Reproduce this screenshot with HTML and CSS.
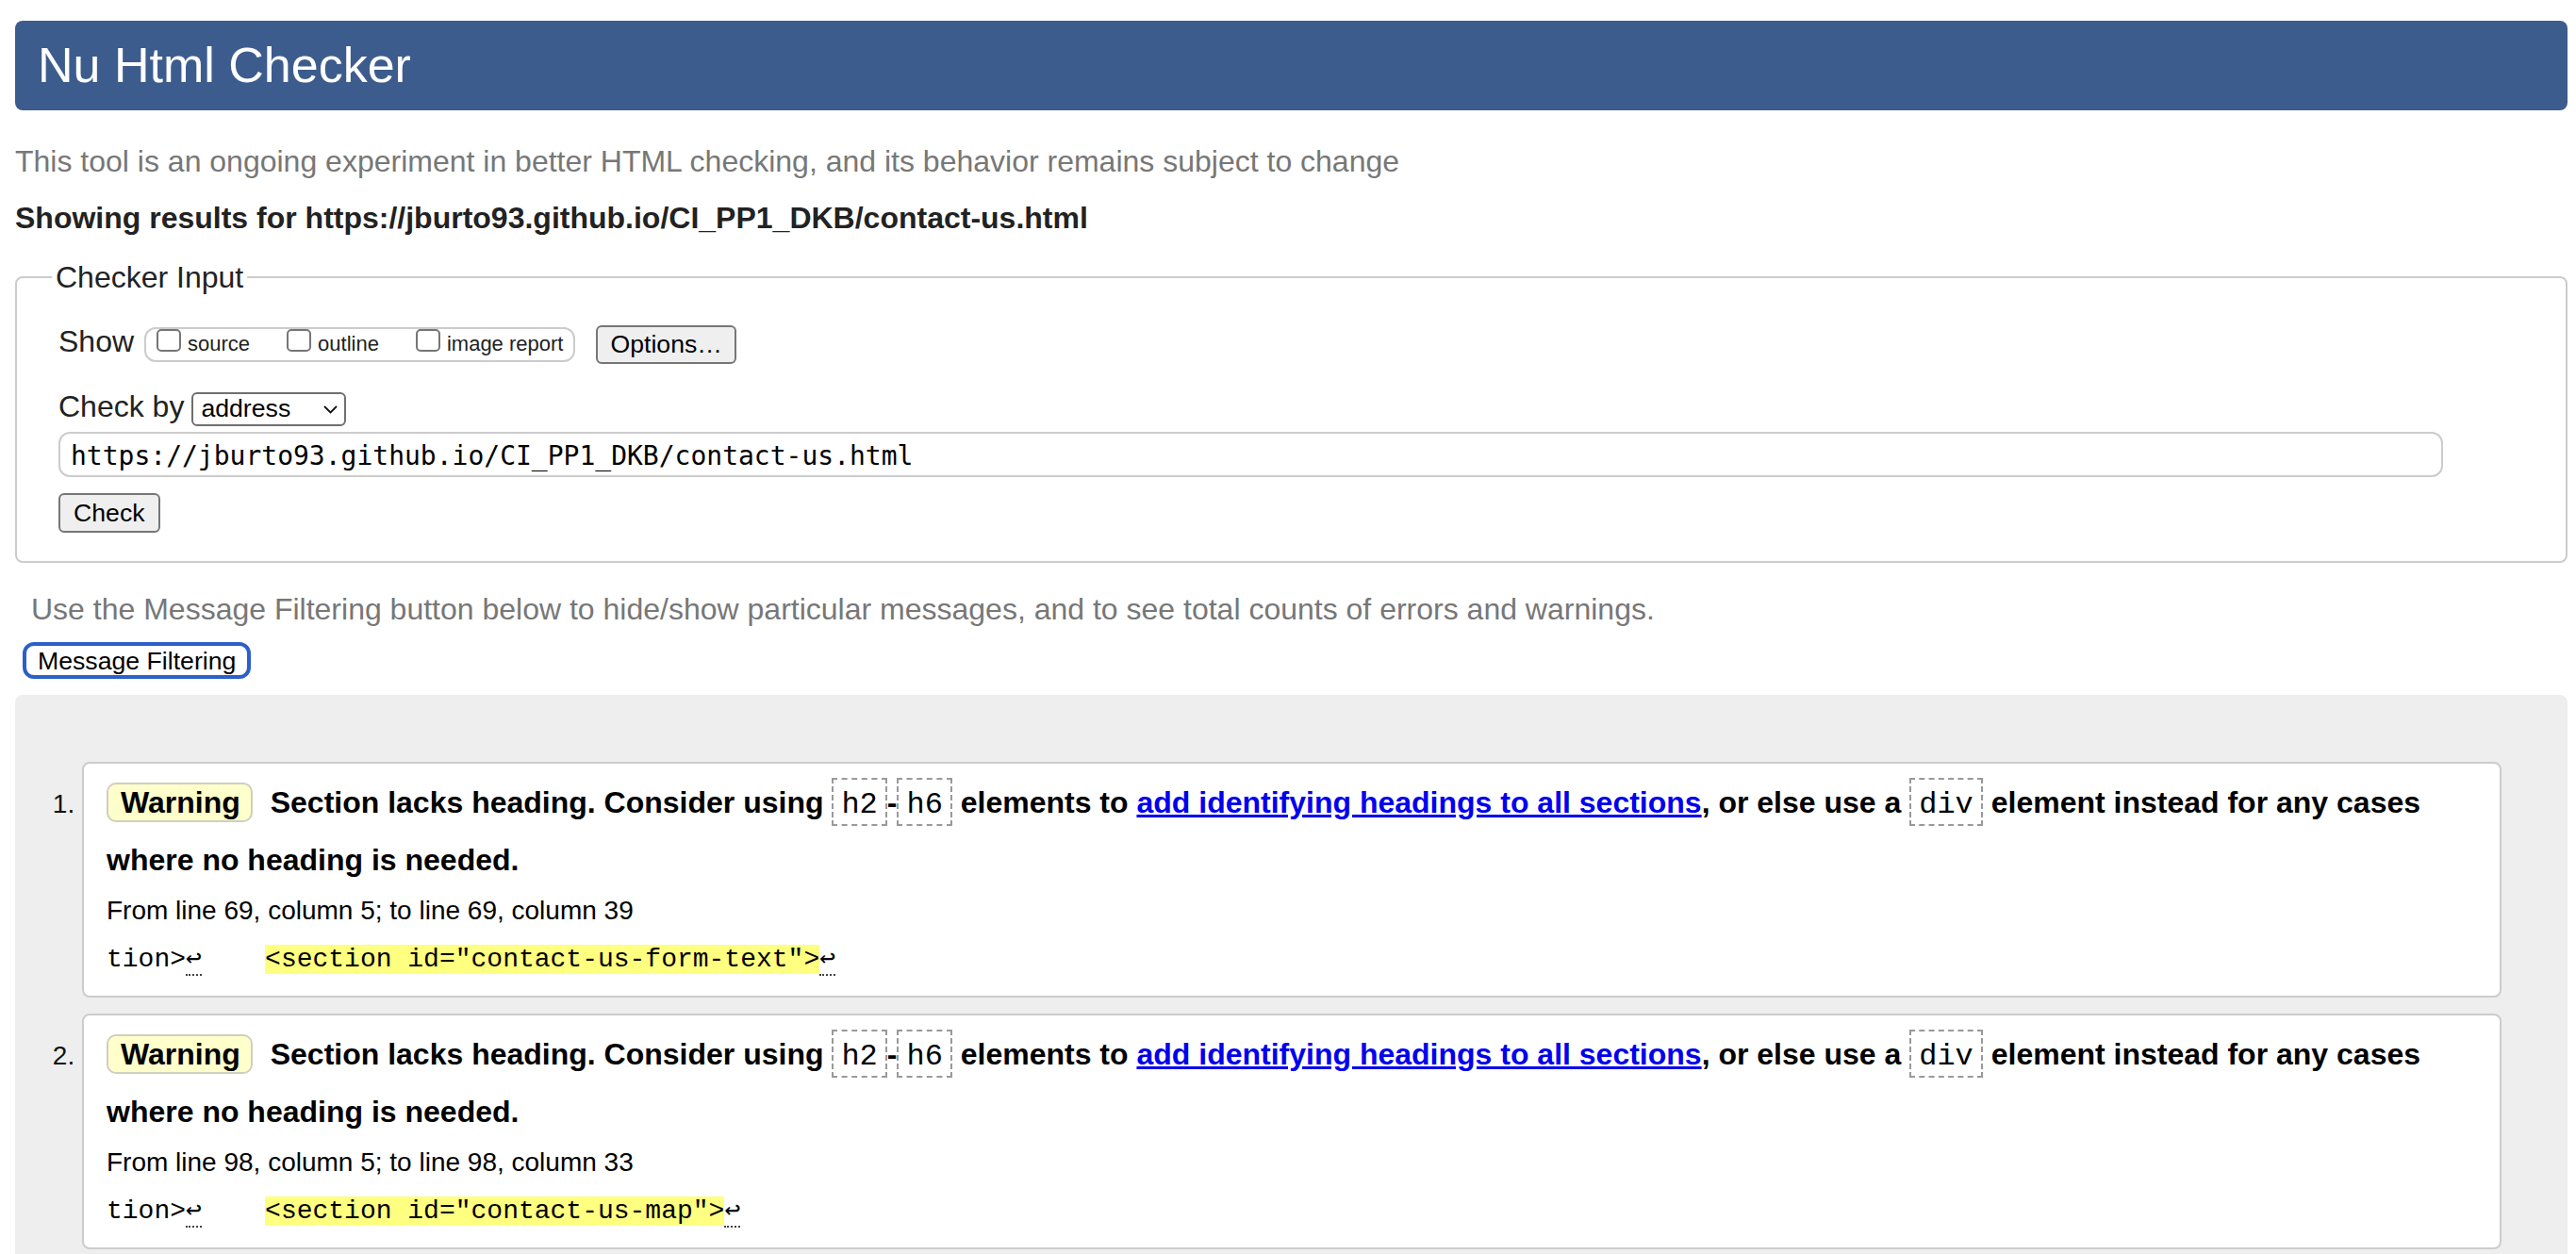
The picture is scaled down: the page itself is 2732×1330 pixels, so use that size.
FILE: index.html
```html
<!DOCTYPE html>
<html lang="en">
<head>
<meta charset="utf-8">
<title>Nu Html Checker</title>
<link rel="stylesheet" href="styles.css">
</head>
<body>
<h1 class="banner">Nu Html Checker</h1>
<p class="intro">This tool is an ongoing experiment in better HTML checking, and its behavior remains subject to change</p>
<p class="showing">Showing results for https://jburto93.github.io/CI_PP1_DKB/contact-us.html</p>

<fieldset class="checker">
  <legend class="legend">Checker Input</legend>
  <div class="row row-show">
    <span class="label">Show</span>
    <span class="opts">
      <label class="opt"><input type="checkbox" class="cb"><span class="opt-text">source</span></label>
      <label class="opt"><input type="checkbox" class="cb"><span class="opt-text">outline</span></label>
      <label class="opt"><input type="checkbox" class="cb"><span class="opt-text">image report</span></label>
    </span>
    <button class="btn btn-options" type="button">Options…</button>
  </div>
  <div class="row row-by">
    <span class="label">Check by</span>
    <span class="select"><span class="select-text">address</span><svg class="chev" width="15" height="9" viewBox="0 0 15 9"><path d="M1 1 L7.5 7.5 L14 1" fill="none" stroke="#111" stroke-width="1.8"/></svg></span>
  </div>
  <input class="url" type="text" value="https://jburto93.github.io/CI_PP1_DKB/contact-us.html">
  <button class="btn btn-check" type="button">Check</button>
</fieldset>

<p class="filter-note">Use the Message Filtering button below to hide/show particular messages, and to see total counts of errors and warnings.</p>
<button class="btn-filter" type="button">Message Filtering</button>

<ol class="results">
  <li class="msg-item">
    <p class="msg"><span class="badge">Warning</span> <span class="seg">Section lacks heading. Consider using</span> <code class="code">h2</code><span class="seg">-</span><code class="code">h6</code> <span class="seg">elements to</span> <a href="#" class="ref">add identifying headings to all sections</a><span class="seg">, or else use a</span> <code class="code">div</code> <span class="seg">element instead for any cases</span> <span class="seg">where no heading is needed.</span></p>
    <p class="loc">From line 69, column 5; to line 69, column 39</p>
    <p class="extract"><span class="seg">tion&gt;</span><span class="lf">↩</span>    <mark class="hl">&lt;section id="contact-us-form-text"&gt;</mark><span class="lf">↩</span></p>
  </li>
  <li class="msg-item">
    <p class="msg"><span class="badge">Warning</span> <span class="seg">Section lacks heading. Consider using</span> <code class="code">h2</code><span class="seg">-</span><code class="code">h6</code> <span class="seg">elements to</span> <a href="#" class="ref">add identifying headings to all sections</a><span class="seg">, or else use a</span> <code class="code">div</code> <span class="seg">element instead for any cases</span> <span class="seg">where no heading is needed.</span></p>
    <p class="loc">From line 98, column 5; to line 98, column 33</p>
    <p class="extract"><span class="seg">tion&gt;</span><span class="lf">↩</span>    <mark class="hl">&lt;section id="contact-us-map"&gt;</mark><span class="lf">↩</span></p>
  </li>
</ol>
</body>
</html>
```

FILE: styles.css
```css
* { box-sizing: border-box; }

html { background: #fff; }

body {
  margin: 0;
  padding: 0 9px 0 16px;
  font-family: "Liberation Sans", Arial, Helvetica, sans-serif;
  color: #222;
}

.banner {
  margin: 22px 0 0;
  height: 95px;
  padding: 0 24px;
  background: #3d5c8e;
  color: #fff;
  font-size: 52px;
  font-weight: normal;
  line-height: 95px;
  border-radius: 8px;
}

.intro {
  margin: 36px 0 0;
  font-size: 32px;
  line-height: 36px;
  color: #777;
}

.showing {
  margin: 24px 0 0;
  font-size: 32px;
  line-height: 36px;
  font-weight: bold;
  color: #222;
}

.checker {
  margin: 27px 0 0;
  padding: 32px 20px 30px 44px;
  border: 2px solid #ccc;
  border-radius: 8px;
  min-width: 0;
}

.legend {
  padding: 0 4px;
  margin-left: -7px;
  font-size: 32px;
  line-height: 36px;
  color: #222;
}

.row {
  display: flex;
  align-items: flex-start;
}

.row-show { height: 42px; }

.label {
  font-size: 32px;
  line-height: 36px;
  color: #222;
}

.opts {
  display: flex;
  align-items: flex-start;
  height: 37px;
  margin: 3px 0 0 11px;
  padding: 0 11px;
  border: 2px solid #ccc;
  border-radius: 12px;
}

.opt {
  display: flex;
  align-items: flex-start;
}

.opt + .opt { margin-left: 39px; }

.cb {
  appearance: none;
  -webkit-appearance: none;
  width: 26px;
  height: 24px;
  margin: 0 7px 0 0;
  border: 2px solid #767676;
  border-radius: 5px;
  background: #fff;
}

.opt-text {
  margin-top: 4px;
  font-size: 22px;
  line-height: 24px;
  color: #222;
}

.btn {
  font-family: "Liberation Sans", Arial, Helvetica, sans-serif;
  font-size: 26.67px;
  color: #000;
  background: #efefef;
  border: 2px solid #767676;
  border-radius: 6px;
  padding: 0 13px;
}

.btn-options {
  height: 41px;
  line-height: 37px;
  margin: 1px 0 0 22px;
}

.row-by { margin-top: 27px; }

.select {
  display: flex;
  align-items: center;
  justify-content: space-between;
  width: 164px;
  height: 36px;
  margin: 3px 0 0 8px;
  padding: 0 7px 3px 8px;
  border: 2px solid #6f6f6f;
  border-radius: 6px;
  background: #fff;
  color: #000;
  font-size: 26.67px;
  line-height: 30px;
}

.chev { margin-top: 3px; }

.url {
  display: block;
  width: 2529px;
  height: 48px;
  margin: 6px 0 0;
  padding: 2px 11px 0;
  border: 2px solid #ccc;
  border-radius: 12px;
  font-family: "DejaVu Sans Mono", monospace;
  font-size: 28px;
  color: #000;
  background: #fff;
  outline: none;
}

.btn-check {
  display: block;
  height: 42px;
  line-height: 38px;
  margin-top: 17px;
  padding: 0 14px;
}

.filter-note {
  margin: 31px 0 0;
  padding-left: 17px;
  font-size: 32px;
  line-height: 36px;
  color: #777;
}

.btn-filter {
  display: block;
  height: 39px;
  margin: 17px 0 0 8px;
  padding: 2px 12px 0;
  border: 4px solid #2b5fc9;
  border-radius: 12px;
  background: #fff;
  color: #000;
  font-family: "Liberation Sans", Arial, Helvetica, sans-serif;
  font-size: 26.67px;
  line-height: 29px;
}

.results {
  margin: 17px 0 0;
  padding: 71px 70px 40px 71px;
  background: #eee;
  border-radius: 8px;
  list-style: decimal outside;
}

.msg-item {
  margin: 0 0 17px;
  padding: 12px 24px 15px;
  border: 2px solid #ccc;
  border-radius: 8px;
  background: #fff;
  font-size: 28px;
  color: #000;
}

.msg-item::marker { color: #111; }

.msg {
  margin: 0;
  font-size: 32px;
  font-weight: bold;
  line-height: 59px;
}

.badge {
  display: inline-block;
  height: 42px;
  padding: 0 11px 0 13px;
  margin-right: 10px;
  border: 2px solid #cfcfbf;
  border-radius: 10px;
  background: #ffffcc;
  line-height: 38px;
}

.code {
  font-family: "Liberation Mono", "Courier New", monospace;
  font-weight: normal;
  font-size: 32px;
  padding: 8px 8px 2px;
  border: 2px dashed #999;
}

.ref {
  color: #0000ee;
  text-decoration: underline;
}

.loc {
  margin: 0;
  font-size: 28px;
  line-height: 47px;
}

.extract {
  margin: 5px 0 0;
  font-family: "Liberation Mono", "DejaVu Sans Mono", monospace;
  font-size: 28px;
  line-height: 47px;
  white-space: pre;
}

.hl {
  background: #ffff80;
  color: #000;
}

.lf {
  border-bottom: 2px dotted #444;
}
```
